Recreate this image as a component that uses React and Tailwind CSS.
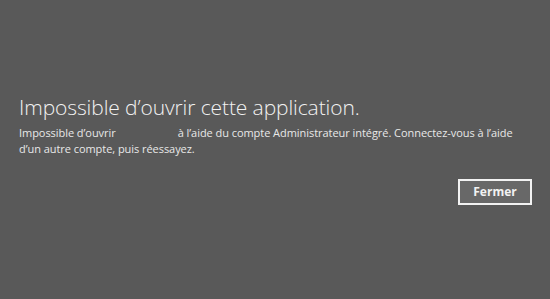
export default function App() {
  return (
    <div className="w-[550px] h-[299px] bg-[#595959] text-[#f2f2f2] font-['Open_Sans',sans-serif] flex flex-col pl-[19px] pr-[18px] pt-[93px]">
      <h1 className="text-[21px] font-light leading-[29px] tracking-[-0.1px]">Impossible d’ouvrir cette application.</h1>
      <p className="mt-[3px] text-[11px] leading-[16px] text-[#e8e8e8] w-[500px] tracking-[-0.05px]">
        <span className="mr-[62px]">Impossible d’ouvrir</span>à l’aide du compte Administrateur intégré. Connectez-vous à l’aide d’un autre compte, puis réessayez.
      </p>
      <div className="flex justify-end mt-[22px]">
        <button className="w-[74px] h-[26px] border-2 border-[#f2f2f2] bg-[#686868] text-[12px] font-bold text-[#f2f2f2] leading-none">
          Fermer
        </button>
      </div>
    </div>
  )
}
